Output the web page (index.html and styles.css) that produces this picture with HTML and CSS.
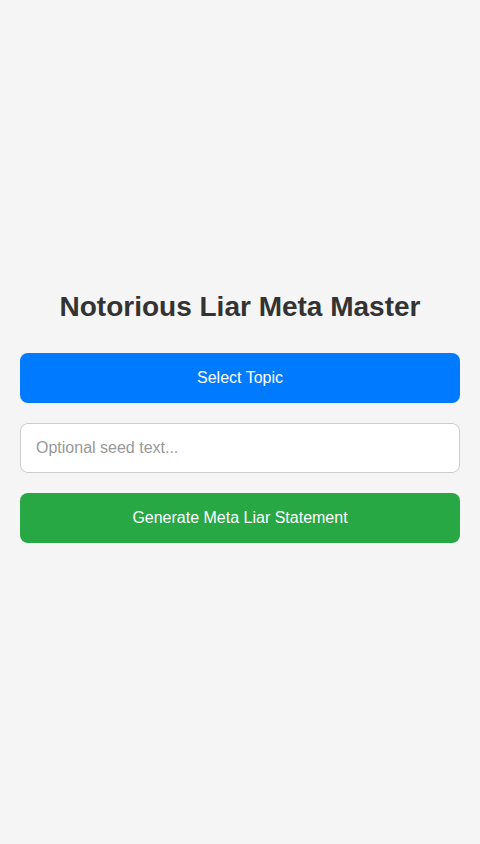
FILE: index.html
```html
<!DOCTYPE html>
<html lang="en">
<head>
<meta charset="utf-8">
<meta name="viewport" content="width=device-width, initial-scale=1">
<title>Notorious Liar Meta Master</title>
<link rel="stylesheet" href="styles.css">
</head>
<body>
<main class="app">
  <h1 class="title">Notorious Liar Meta Master</h1>
  <button class="btn btn-blue" type="button">Select Topic</button>
  <input class="seed" type="text" placeholder="Optional seed text...">
  <button class="btn btn-green" type="button">Generate Meta Liar Statement</button>
</main>
</body>
</html>
```
FILE: styles.css
```css
* { box-sizing: border-box; }
html, body { margin: 0; padding: 0; }
body {
  background: #f5f5f5;
  font-family: "Liberation Sans", Arial, sans-serif;
  color: #333;
  min-height: 100vh;
  display: flex;
  flex-direction: column;
  justify-content: center;
}
.app {
  display: flex;
  flex-direction: column;
  gap: 20px;
  padding: 21px 20px 31px;
}
.title {
  margin: 0 0 10px;
  font-size: 28px;
  font-weight: bold;
  text-align: center;
  color: #333;
}
.btn {
  height: 50px;
  border: none;
  border-radius: 8px;
  color: #fff;
  font-family: inherit;
  font-size: 16px;
  cursor: pointer;
}
.btn-blue { background: #007bff; }
.btn-green { background: #28a745; }
.seed {
  height: 50px;
  border: 1px solid #ccc;
  border-radius: 8px;
  background: #fff;
  padding: 0 15px;
  font-family: inherit;
  font-size: 16px;
  color: #333;
}
.seed::placeholder { color: #999; }
```
